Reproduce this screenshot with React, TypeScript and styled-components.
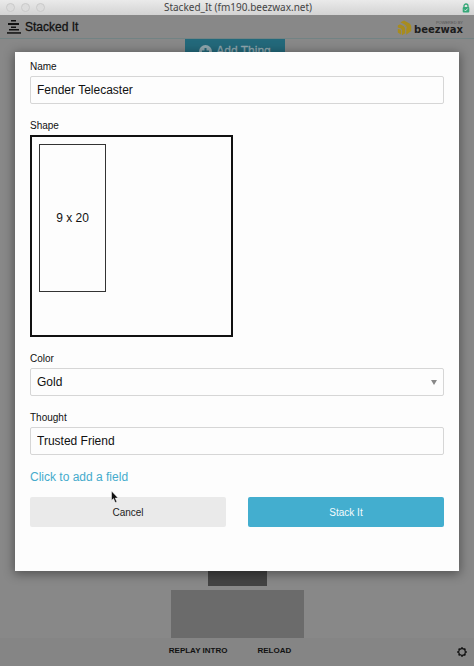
import React from "react";
import styled, { createGlobalStyle } from "styled-components";

const GlobalStyle = createGlobalStyle`
  *, *::before, *::after { box-sizing: border-box; }
  body {
    margin: 0;
    font-family: "Liberation Sans", Arial, sans-serif;
    color: #111;
  }
  button, input, select { font: inherit; color: inherit; }
`;

const Window = styled.div`
  position: relative;
  display: flex;
  flex-direction: column;
  min-height: 100vh;
  background: #888;
`;

const TitleBar = styled.header`
  display: grid;
  grid-template-columns: 1fr auto 1fr;
  align-items: center;
  height: 15px;
  padding: 0 4px 0 6px;
  background: linear-gradient(#eaeaea, #d3d3d3);
`;

const WindowTitle = styled.div`
  font: 10px/15px "Noto Sans", sans-serif;
  color: #444;
`;

const Lights = styled.div`
  display: flex;
  gap: 6px;
`;

const Light = styled.span`
  width: 9px;
  height: 9px;
  border: 1px solid #cacaca;
  border-radius: 50%;
  background: #dcdcdc;
`;

const Lock = styled.svg`
  justify-self: end;
`;

const AppBar = styled.div`
  display: flex;
  align-items: center;
  justify-content: space-between;
  height: 24px;
  padding: 0 11px 0 7px;
  border-bottom: 1px solid #728384;
`;

const Brand = styled.h1`
  display: flex;
  align-items: center;
  gap: 4px;
  margin: 0;
  font-size: 12px;
  font-weight: 400;
  line-height: 16px;
  -webkit-text-stroke: 0.3px #111;
`;

const Sponsor = styled.div`
  display: flex;
  align-items: center;
  gap: 2px;
  padding-top: 2px;
`;

const SponsorText = styled.div`
  display: flex;
  flex-direction: column;
  align-items: flex-end;
  font: 700 10px/9px "DejaVu Sans", sans-serif;
  color: #1c1c1c;
`;

const PoweredBy = styled.span`
  font: 4px/4px "Liberation Sans", Arial, sans-serif;
  color: #555;
`;

const Main = styled.main`
  display: flex;
  flex: 1;
  flex-direction: column;
  align-items: center;
  justify-content: space-between;
`;

const AddButton = styled.button`
  display: flex;
  align-items: center;
  justify-content: center;
  gap: 4px;
  width: 100px;
  height: 24px;
  margin-right: 4px;
  padding: 0;
  border: 0;
  background: #23697b;
  color: #91a7ae;
  font-size: 12px;
  -webkit-text-stroke: 0.3px #91a7ae;
`;

const Pile = styled.div`
  display: flex;
  flex-direction: column;
  align-items: center;
  gap: 4px;
`;

const Block = styled.div<{ $width: number; $height: number; $tone: string }>`
  width: ${(p) => p.$width}px;
  height: ${(p) => p.$height}px;
  background: ${(p) => p.$tone};
`;

const Footer = styled.footer`
  display: grid;
  grid-template-columns: 1fr auto 1fr;
  align-items: center;
  height: 28px;
  padding: 0 7px 2px;
  background: #858585;
`;

const FooterActions = styled.nav`
  display: flex;
  grid-column: 2;
  gap: 30px;
  margin-right: 14px;
`;

const FooterButton = styled.button`
  padding: 0;
  border: 0;
  background: none;
  font-size: 8px;
  font-weight: 700;
  line-height: 12px;
`;

const GearButton = styled.button`
  display: flex;
  justify-self: end;
  padding: 2px 0 0;
  border: 0;
  background: none;
`;

const Dialog = styled.form`
  position: absolute;
  top: 52px;
  left: 15px;
  right: 15px;
  padding: 8px 15px 44px;
  background: #fdfdfd;
  box-shadow: 0 2px 10px 1px rgba(0, 0, 0, 0.4);
`;

const Field = styled.div`
  display: flex;
  flex-direction: column;
  align-items: flex-start;
  gap: 2px;
  margin-bottom: 15px;
`;

const Label = styled.label`
  font-size: 10px;
  line-height: 14px;
`;

const TextInput = styled.input`
  width: 100%;
  height: 28px;
  padding: 0 6px;
  border: 1px solid #d6d6d6;
  border-radius: 2px;
  background: #fdfdfd;
  font-size: 12px;
  outline: none;
`;

const SelectWrap = styled.div`
  display: grid;
  width: 100%;
  align-items: center;
`;

const Select = styled.select`
  grid-area: 1 / 1;
  width: 100%;
  height: 28px;
  padding: 0 6px;
  border: 1px solid #d6d6d6;
  border-radius: 2px;
  background: #fdfdfd;
  font-size: 12px;
  appearance: none;
`;

const Caret = styled.svg`
  grid-area: 1 / 1;
  justify-self: end;
  margin-right: 7px;
  pointer-events: none;
`;

const ShapeArea = styled.div`
  width: 203px;
  height: 202px;
  padding: 7px;
  border: 2px solid #111;
`;

const Shape = styled.div`
  display: flex;
  align-items: center;
  justify-content: center;
  width: 67px;
  height: 148px;
  border: 1px solid #333;
  font-size: 12px;
`;

const AddFieldLink = styled.a`
  display: block;
  width: fit-content;
  color: #45abcc;
  font-size: 12px;
  line-height: 14px;
  text-decoration: none;
`;

const Actions = styled.div`
  display: grid;
  grid-template-columns: 1fr 1fr;
  gap: 22px;
  margin-top: 13px;
`;

const ActionButton = styled.button<{ $primary?: boolean }>`
  height: 30px;
  padding: 0;
  border: 0;
  border-radius: 2px;
  background: ${(p) => (p.$primary ? "#43aecf" : "#eaeaea")};
  color: ${(p) => (p.$primary ? "#f4fbfd" : "#222")};
  font-size: 10px;
`;

const Pointer = styled.svg`
  position: absolute;
  top: 490px;
  left: 111px;
  pointer-events: none;
`;

const gearTeeth = [0, 45, 90, 135, 180, 225, 270, 315];

export default function App() {
  return (
    <>
      <GlobalStyle />
      <Window>
        <TitleBar>
          <Lights>
            <Light />
            <Light />
            <Light />
          </Lights>
          <WindowTitle>Stacked_It (fm190.beezwax.net)</WindowTitle>
          <Lock width="8" height="10" viewBox="0 0 8 10" aria-hidden="true">
            <path d="M2 4.5V3a2 2 0 0 1 4 0v1.5" fill="none" stroke="#35a878" strokeWidth="1.3" />
            <rect x="0.7" y="4" width="6.6" height="5.5" rx="1" fill="#35a878" />
            <path d="m2.3 6.7 1.2 1.2 2.2-2.4" fill="none" stroke="#e5f4ed" strokeWidth="0.9" />
          </Lock>
        </TitleBar>

        <AppBar>
          <Brand>
            <svg width="14" height="14" viewBox="0 0 14 14" fill="#111" aria-hidden="true">
              <rect x="4" y="0" width="5" height="1.5" />
              <rect x="1" y="3" width="11" height="2" />
              <rect x="4" y="6.5" width="5" height="1.5" />
              <rect x="2" y="9" width="10" height="1.5" />
              <rect x="0" y="12.2" width="14" height="1.5" />
            </svg>
            Stacked It
          </Brand>
          <Sponsor>
            <svg width="15" height="16" viewBox="0 0 15 16" fill="#a88c1d" aria-label="beezwax logo">
              <path d="M3.5 2.2 7 .4 13 3.7 14.200 6v5L9.200 14.800V8.200L7.800 5.500z" />
              <path d="M.8 5.500 3 4.200 7 6.300 8.200 8.500v4.800L5 15.200V10.500L4 8.600.8 7.600z" />
              <path d="M.8 9 3.400 9.600 4.200 11v3.800L.8 12.600z" />
              <path d="M2.500 3.700Q9 3.400 9.400 8.400" fill="none" stroke="#888" strokeWidth="0.9" />
            </svg>
            <SponsorText>
              <PoweredBy>POWERED BY</PoweredBy>
              beezwax
            </SponsorText>
          </Sponsor>
        </AppBar>

        <Main>
          <AddButton type="button">
            <svg width="13" height="13" viewBox="0 0 13 13" aria-hidden="true">
              <circle cx="6.5" cy="6.5" r="6.5" fill="#91a7ae" />
              <path d="M6.5 3v7M3 6.5h7" stroke="#23697b" strokeWidth="2" />
            </svg>
            Add Thing
          </AddButton>
          <Pile>
            <Block $width={59} $height={48} $tone="#434343" />
            <Block $width={133} $height={48} $tone="#6b6b6b" />
          </Pile>
        </Main>

        <Footer>
          <FooterActions>
            <FooterButton type="button">REPLAY INTRO</FooterButton>
            <FooterButton type="button">RELOAD</FooterButton>
          </FooterActions>
          <GearButton type="button" aria-label="Settings">
            <svg width="10" height="10" viewBox="0 0 10 10" aria-hidden="true">
              <circle cx="5" cy="5" r="3.3" fill="none" stroke="#111" strokeWidth="1.2" />
              {gearTeeth.map((angle) => (
                <rect
                  key={angle}
                  x="4.2"
                  y="0.2"
                  width="1.6"
                  height="1.5"
                  fill="#111"
                  transform={`rotate(${angle} 5 5)`}
                />
              ))}
            </svg>
          </GearButton>
        </Footer>

        <Dialog role="dialog" aria-label="Add Thing" onSubmit={(e) => e.preventDefault()}>
          <Field>
            <Label htmlFor="name">Name</Label>
            <TextInput id="name" defaultValue="Fender Telecaster" />
          </Field>
          <Field>
            <Label as="span" id="shape-label">Shape</Label>
            <ShapeArea role="group" aria-labelledby="shape-label">
              <Shape>9 x 20</Shape>
            </ShapeArea>
          </Field>
          <Field>
            <Label htmlFor="color">Color</Label>
            <SelectWrap>
              <Select id="color" defaultValue="Gold">
                <option>Gold</option>
              </Select>
              <Caret width="6" height="5" viewBox="0 0 6 5" aria-hidden="true">
                <path d="M0 0h6L3 5z" fill="#888" />
              </Caret>
            </SelectWrap>
          </Field>
          <Field>
            <Label htmlFor="thought">Thought</Label>
            <TextInput id="thought" defaultValue="Trusted Friend" />
          </Field>
          <AddFieldLink href="#add-field">Click to add a field</AddFieldLink>
          <Actions>
            <ActionButton type="button">Cancel</ActionButton>
            <ActionButton type="submit" $primary>Stack It</ActionButton>
          </Actions>
        </Dialog>

        <Pointer width="8" height="14" viewBox="0 0 8 14" aria-hidden="true">
          <path
            d="M.5 1v9.5l2-1.9 1.7 4 1.7-.7-1.7-3.8h2.9z"
            fill="#111"
            stroke="#fff"
            strokeWidth="0.5"
          />
        </Pointer>
      </Window>
    </>
  );
}
